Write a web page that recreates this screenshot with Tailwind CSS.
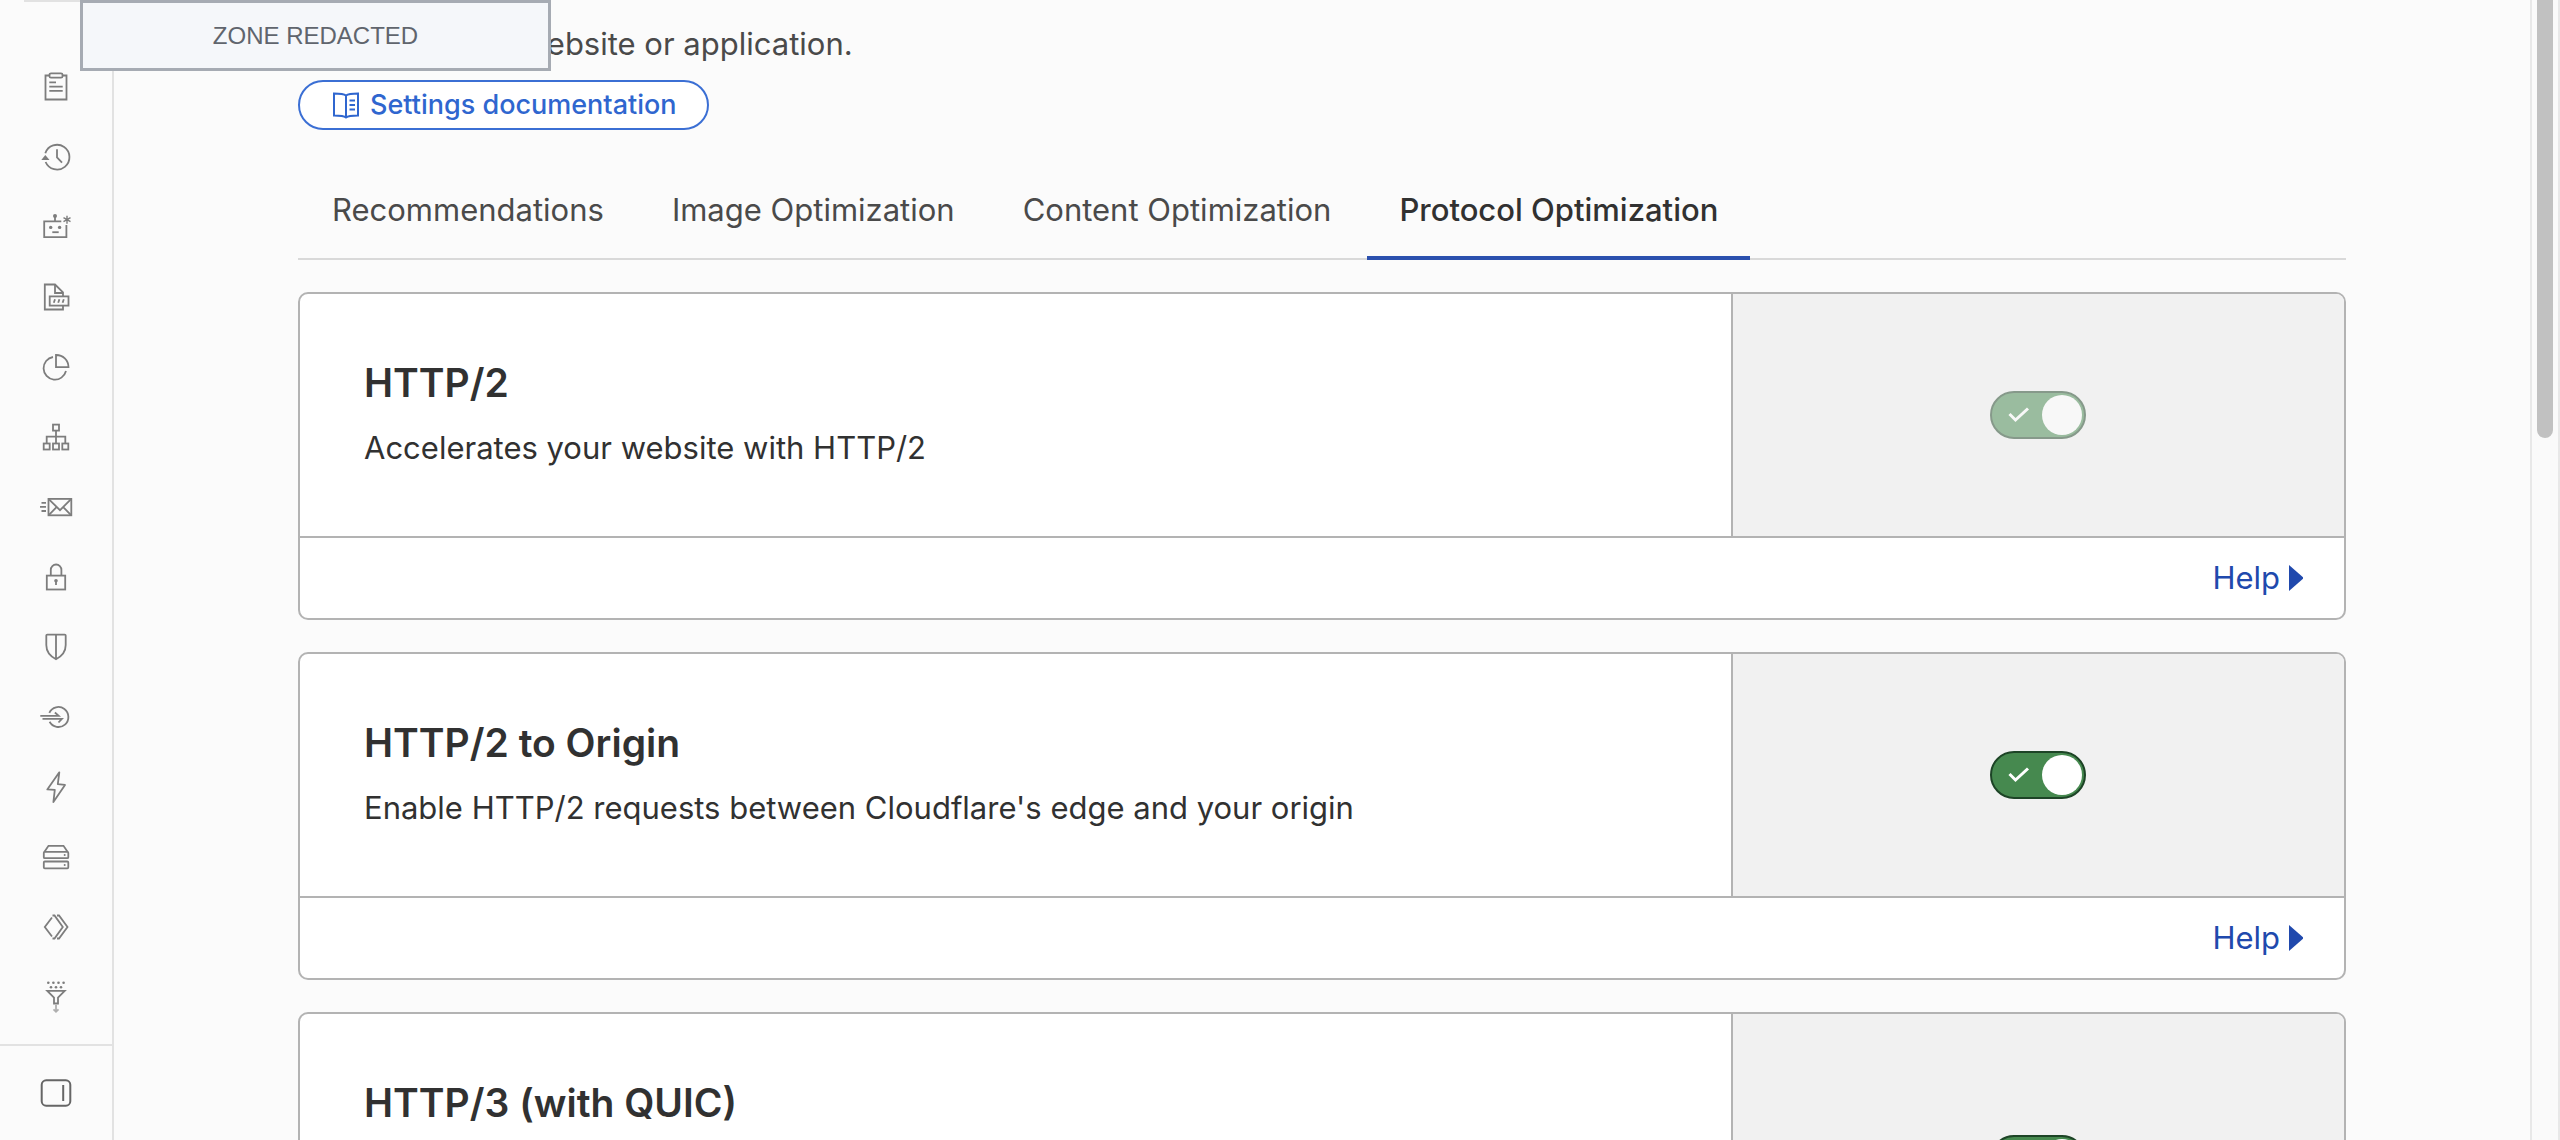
<!DOCTYPE html>
<html lang="en">
<head>
  <meta charset="UTF-8" />
  <meta name="viewport" content="width=device-width, initial-scale=1.0" />
  <title>Protocol Optimization</title>
  <script src="https://cdn.jsdelivr.net/npm/@tailwindcss/browser@4"></script>
</head>
<body class="h-screen overflow-hidden bg-[#fbfbfb] font-['Inter',sans-serif] text-[#313131]">
  <div class="relative flex h-full">

    <!-- Sidebar -->
    <aside class="flex w-[114px] shrink-0 flex-col border-r-2 border-[#e2e2e2] text-[#7d7d7d]">
      <nav class="flex flex-1 flex-col overflow-hidden" aria-label="Zone">
        <div class="mb-[50px] ml-6 h-0.5 shrink-0 bg-[#e2e2e2]"></div>
        <a href="#" aria-label="Overview" class="flex h-[70px] shrink-0 items-center justify-center">
          <svg class="size-10" viewBox="0 0 40 40" fill="none" stroke="currentColor" stroke-width="1.8">
            <path d="M13.5 8.5H9.5v24h21v-24h-4" />
            <rect x="13.5" y="6.3" width="13" height="4.4" rx="1.5" />
            <path d="M13.3 15.3H20M13.3 19.6h13.4M13.3 23.8h13.4" />
          </svg>
        </a>
        <a href="#" aria-label="History" class="flex h-[70px] shrink-0 items-center justify-center">
          <svg class="size-10" viewBox="0 0 40 40" fill="none" stroke="currentColor" stroke-width="1.8">
            <path d="M9.3 16.2A12.4 12.4 0 1 1 9.6 25" />
            <path d="M9.3 18l4.200 5H5.300z" fill="currentColor" stroke="none" />
            <path d="M21 12.3v8l5 5.4" />
          </svg>
        </a>
        <a href="#" aria-label="AI Crawl Control" class="flex h-[70px] shrink-0 items-center justify-center">
          <svg class="size-10" viewBox="0 0 40 40" fill="none" stroke="currentColor" stroke-width="1.8">
            <path d="M25.3 14.4H8.2v15.8h22.2V18M19 14.4V9" />
            <path d="M31 8.7v8M27.5 10.7l7 4M34.5 10.7l-7 4" stroke-width="1.4" />
            <path d="M16.3 25.2h6.4" />
            <g fill="currentColor" stroke="none">
              <circle cx="19" cy="9" r="2" />
              <circle cx="14.7" cy="20.4" r="1.7" />
              <circle cx="23.6" cy="20.4" r="1.7" />
            </g>
          </svg>
        </a>
        <a href="#" aria-label="Log Explorer" class="flex h-[70px] shrink-0 items-center justify-center">
          <svg class="size-10" viewBox="0 0 40 40" fill="none" stroke="currentColor" stroke-width="1.8">
            <path d="M27 19V15.3L19 7.5H8.8v25H27v-3.6" />
            <path d="M19 7.5V16h8" />
            <rect x="13.7" y="19.4" width="18.8" height="9.2" />
            <path d="M19 22.3l-1.2 3.4M23.4 22.3l-1.2 3.4M27.8 22.3l-1.2 3.4" />
          </svg>
        </a>
        <a href="#" aria-label="Analytics" class="flex h-[70px] shrink-0 items-center justify-center">
          <svg class="size-10" viewBox="0 0 40 40" fill="none" stroke="currentColor" stroke-width="1.8">
            <path d="M20 8v12.200h12.500A12.200 12.200 0 0 0 20 8z" />
            <path d="M17 10a11.400 11.400 0 1 0 13 14.100" />
          </svg>
        </a>
        <a href="#" aria-label="DNS" class="flex h-[70px] shrink-0 items-center justify-center">
          <svg class="size-10" viewBox="0 0 40 40" fill="none" stroke="currentColor" stroke-width="1.8">
            <rect x="17" y="7.6" width="6" height="6" />
            <rect x="7.7" y="26.5" width="6" height="6" />
            <rect x="17" y="26.5" width="6" height="6" />
            <rect x="26.3" y="26.5" width="6" height="6" />
            <path d="M20 13.6v12.9M10.7 26.5v-6.8h18.6v6.8" />
          </svg>
        </a>
        <a href="#" aria-label="Email" class="flex h-[70px] shrink-0 items-center justify-center">
          <svg class="size-10" viewBox="0 0 40 40" fill="none" stroke="currentColor" stroke-width="1.8">
            <rect x="12.5" y="11.9" width="22.8" height="16.4" />
            <path d="M12.5 11.9L24 23.2l11.3-11.3M12.5 28.3l8.3-8.4M35.3 28.3L27 19.9" />
            <path d="M5.5 15.8H10M4 19.8h6M5.5 24H10" />
          </svg>
        </a>
        <a href="#" aria-label="SSL/TLS" class="flex h-[70px] shrink-0 items-center justify-center">
          <svg class="size-10" viewBox="0 0 40 40" fill="none" stroke="currentColor" stroke-width="1.8">
            <rect x="10.8" y="18.6" width="18.4" height="13.9" />
            <path d="M14.8 18.6v-5.800a5.300 5.300 0 0 1 10.600 0v5.800M20 23.500V28" />
            <circle cx="20" cy="23.8" r="1.8" fill="currentColor" stroke="none" />
          </svg>
        </a>
        <a href="#" aria-label="Security" class="flex h-[70px] shrink-0 items-center justify-center">
          <svg class="size-10" viewBox="0 0 40 40" fill="none" stroke="currentColor" stroke-width="1.8">
            <path d="M11.3 7.6h17.4a1 1 0 0 1 1 1V18c0 6.5-3.8 11.2-9.7 14.2C14.1 29.2 10.3 24.5 10.3 18V8.6a1 1 0 0 1 1-1zM20 7.6v24.6" />
          </svg>
        </a>
        <a href="#" aria-label="Access" class="flex h-[70px] shrink-0 items-center justify-center">
          <svg class="size-10" viewBox="0 0 40 40" fill="none" stroke="currentColor" stroke-width="1.8">
            <path d="M13.3 15.8a10 10 0 1 1 .3 9" />
            <path d="M4.3 18.9h18.4l-3.8-3.4M6.5 21.9h19.4l-3.4 3.6" />
          </svg>
        </a>
        <a href="#" aria-label="Speed" class="flex h-[70px] shrink-0 items-center justify-center">
          <svg class="size-10" viewBox="0 0 40 40" fill="none" stroke="currentColor" stroke-width="1.8" stroke-linejoin="round">
            <path d="M23.3 5.3L11.3 22.4l7.5.4-1.4 12.2L29 17.9l-7.2-.7z" />
          </svg>
        </a>
        <a href="#" aria-label="Caching" class="flex h-[70px] shrink-0 items-center justify-center">
          <svg class="size-10" viewBox="0 0 40 40" fill="none" stroke="currentColor" stroke-width="1.8">
            <rect x="7.8" y="14.8" width="24.5" height="6.4" rx="1" />
            <rect x="7.8" y="24.5" width="24.5" height="6.8" rx="1" />
            <path d="M8.3 15l4.2-6.2h15l4.2 6.2" />
            <circle cx="28.7" cy="18" r="1" fill="currentColor" stroke="none" />
            <circle cx="28.7" cy="28" r="1" fill="currentColor" stroke="none" />
          </svg>
        </a>
        <a href="#" aria-label="Workers Routes" class="flex h-[70px] shrink-0 items-center justify-center">
          <svg class="size-10" viewBox="0 0 40 40" fill="none" stroke="currentColor" stroke-width="1.8">
            <path d="M16 10.5L8.8 20l7.2 9.5M16.5 8.5h2L26.8 20l-8.3 11.5h-2M21 8.5h2L31.5 20 23 31.5h-2" />
          </svg>
        </a>
        <a href="#" aria-label="Rules" class="flex h-[70px] shrink-0 items-center justify-center">
          <svg class="size-10" viewBox="0 0 40 40" fill="none" stroke="currentColor" stroke-width="1.8">
            <path d="M11.3 13.8h17.4L22 20.5v6h-4v-6z" />
            <path d="M20 28v6.5M17.5 32.3l2.5 2.5 2.5-2.5" opacity=".6" />
            <g fill="currentColor" stroke="none">
              <circle cx="12.3" cy="5.8" r="1.3" />
              <circle cx="17.4" cy="5.8" r="1.3" />
              <circle cx="22.5" cy="5.8" r="1.3" />
              <circle cx="27.6" cy="5.8" r="1.3" />
              <circle cx="15" cy="10.3" r="1.3" />
              <circle cx="20" cy="10.3" r="1.3" />
              <circle cx="25" cy="10.3" r="1.3" />
            </g>
          </svg>
        </a>
      </nav>
      <div class="flex h-24 shrink-0 items-center justify-center border-t-2 border-[#e2e2e2]">
        <button type="button" aria-label="Collapse sidebar" class="text-[#666666]">
          <svg class="size-10" viewBox="0 0 40 40" fill="none" stroke="currentColor" stroke-width="2">
            <rect x="5.7" y="7.3" width="28.6" height="25.4" rx="4.5" />
            <path d="M27.2 12v16" />
          </svg>
        </button>
      </div>
    </aside>

    <!-- Page content -->
    <main class="min-w-0 flex-1 overflow-hidden px-46 pt-6">
      <p class="pl-56 text-[31px] leading-10 text-[#4a4a4a]">website or application.</p>
      <a href="#" class="mt-4 inline-flex h-[50px] items-center gap-2 rounded-full border-2 border-[#3b6fd4] bg-white px-[30px] text-[27px] font-medium text-[#2f66cf]">
        <svg class="size-8" viewBox="0 0 32 32" fill="none" stroke="currentColor" stroke-width="2">
          <path d="M16 6.5C14 5 11 4.5 4 4.5v22c7 0 10 .3 12 2 2-1.7 5-2 12-2v-22c-7 0-10 .5-12 2zM16 6.5v22M19.5 11.5H25M19.5 16H25M19.5 20.5H25" />
        </svg>
        Settings documentation
      </a>

      <nav class="mt-[46px] flex h-[84px] gap-1 border-b-2 border-[#d9d9d9] px-0.5 text-[31px] leading-10 text-[#4a4a4a]" aria-label="Optimization">
        <a href="#" class="px-8 pt-[14px]">Recommendations</a>
        <a href="#" class="px-8 pt-[14px]">Image Optimization</a>
        <a href="#" class="px-8 pt-[14px]">Content Optimization</a>
        <a href="#" aria-current="page" class="-mb-0.5 border-b-4 border-[#2b50ae] px-8 pt-[14px] font-medium text-[#313131]">Protocol Optimization</a>
      </nav>

      <div class="mt-8 flex flex-col gap-8">
        <section class="overflow-hidden rounded-[10px] border-2 border-[#b3b3b3] bg-white">
          <div class="flex h-[244px] border-b-2 border-[#b3b3b3]">
            <div class="w-[70%] px-16 pt-16">
              <h2 class="text-[39px] leading-[50px] font-semibold">HTTP/2</h2>
              <p class="mt-5 text-[31px] leading-10">Accelerates your website with HTTP/2</p>
            </div>
            <div class="flex flex-1 items-center justify-center border-l-2 border-[#b3b3b3] bg-[#f1f1f1]">
              <label class="relative flex opacity-50">
                <input type="checkbox" aria-label="HTTP/2" checked disabled class="h-12 w-24 appearance-none rounded-full border-2 border-[#1d4426] bg-[#46894f]" />
                <svg class="absolute top-4 left-4 h-4 w-6" viewBox="0 0 24 16" fill="none" stroke="#fff" stroke-width="3"><path d="M3.500 7l6 6L22 1.500" /></svg>
                <span class="absolute top-1 right-1 size-10 rounded-full bg-white"></span>
              </label>
            </div>
          </div>
          <div class="flex h-20 items-center justify-end px-10">
            <a href="#" class="flex items-center gap-2 text-[31px] leading-10 text-[#2049ad]">Help
              <svg class="h-[26px] w-4" viewBox="0 0 16 26" fill="currentColor"><path d="M1 0l14 12.2v1.6L1 26z" /></svg>
            </a>
          </div>
        </section>

        <section class="overflow-hidden rounded-[10px] border-2 border-[#b3b3b3] bg-white">
          <div class="flex h-[244px] border-b-2 border-[#b3b3b3]">
            <div class="w-[70%] px-16 pt-16">
              <h2 class="text-[39px] leading-[50px] font-semibold">HTTP/2 to Origin</h2>
              <p class="mt-5 text-[31px] leading-10">Enable HTTP/2 requests between Cloudflare's edge and your origin</p>
            </div>
            <div class="flex flex-1 items-center justify-center border-l-2 border-[#b3b3b3] bg-[#f1f1f1]">
              <label class="relative flex">
                <input type="checkbox" aria-label="HTTP/2 to Origin" checked class="h-12 w-24 appearance-none rounded-full border-2 border-[#1d4426] bg-[#46894f]" />
                <svg class="pointer-events-none absolute top-4 left-4 h-4 w-6" viewBox="0 0 24 16" fill="none" stroke="#fff" stroke-width="3"><path d="M3.500 7l6 6L22 1.500" /></svg>
                <span class="pointer-events-none absolute top-1 right-1 size-10 rounded-full bg-white"></span>
              </label>
            </div>
          </div>
          <div class="flex h-20 items-center justify-end px-10">
            <a href="#" class="flex items-center gap-2 text-[31px] leading-10 text-[#2049ad]">Help
              <svg class="h-[26px] w-4" viewBox="0 0 16 26" fill="currentColor"><path d="M1 0l14 12.2v1.6L1 26z" /></svg>
            </a>
          </div>
        </section>

        <section class="overflow-hidden rounded-[10px] border-2 border-[#b3b3b3] bg-white">
          <div class="flex h-[292px] border-b-2 border-[#b3b3b3]">
            <div class="w-[70%] px-16 pt-16">
              <h2 class="text-[39px] leading-[50px] font-semibold">HTTP/3 (with QUIC)</h2>
            </div>
            <div class="flex flex-1 items-center justify-center border-l-2 border-[#b3b3b3] bg-[#f1f1f1]">
              <label class="relative flex">
                <input type="checkbox" aria-label="HTTP/3 (with QUIC)" checked class="h-12 w-24 appearance-none rounded-full border-2 border-[#1d4426] bg-[#46894f]" />
                <svg class="pointer-events-none absolute top-4 left-4 h-4 w-6" viewBox="0 0 24 16" fill="none" stroke="#fff" stroke-width="3"><path d="M3.500 7l6 6L22 1.500" /></svg>
                <span class="pointer-events-none absolute top-1 right-1 size-10 rounded-full bg-white"></span>
              </label>
            </div>
          </div>
        </section>
      </div>
    </main>

    <!-- Scrollbar -->
    <div class="flex w-[30px] shrink-0 justify-center border-x-2 border-[#e8e8e8] bg-[#fafafa]">
      <div class="h-[438px] w-4 rounded-b-full bg-[#c1c1c1]"></div>
    </div>

    <!-- Zone name cover -->
    <div class="absolute top-0 left-20 flex h-[71px] w-[471px] items-center justify-center border-3 border-[#a6abb3] bg-[#f5f7fa] font-['Liberation_Sans',sans-serif] text-2xl text-[#60656d]">ZONE REDACTED</div>
  </div>
</body>
</html>
